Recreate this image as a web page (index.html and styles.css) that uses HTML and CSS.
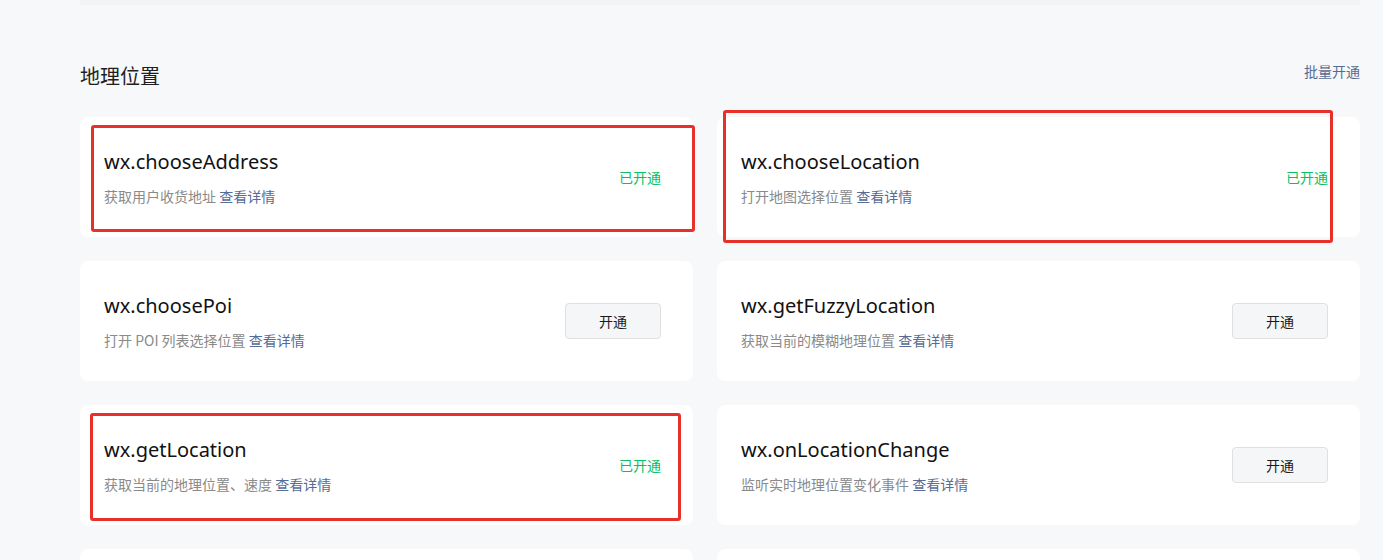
FILE: index.html
```html
<!DOCTYPE html>
<html lang="zh-CN">
<head>
<meta charset="utf-8">
<title>地理位置</title>
<link rel="stylesheet" href="styles.css">
</head>
<body>
<div class="page">
  <div class="top-bar"></div>
  <div class="section-head">
    <h2 class="section-title">地理位置</h2>
    <a class="batch-link">批量开通</a>
  </div>
  <div class="grid">
    <div class="card">
      <div class="info">
        <div class="api-name">wx.chooseAddress</div>
        <div class="api-desc">获取用户收货地址 <a class="detail">查看详情</a></div>
      </div>
      <span class="status">已开通</span>
    </div>
    <div class="card">
      <div class="info">
        <div class="api-name">wx.chooseLocation</div>
        <div class="api-desc">打开地图选择位置 <a class="detail">查看详情</a></div>
      </div>
      <span class="status">已开通</span>
    </div>
    <div class="card">
      <div class="info">
        <div class="api-name">wx.choosePoi</div>
        <div class="api-desc">打开 POI 列表选择位置 <a class="detail">查看详情</a></div>
      </div>
      <button class="open-btn">开通</button>
    </div>
    <div class="card">
      <div class="info">
        <div class="api-name">wx.getFuzzyLocation</div>
        <div class="api-desc">获取当前的模糊地理位置 <a class="detail">查看详情</a></div>
      </div>
      <button class="open-btn">开通</button>
    </div>
    <div class="card">
      <div class="info">
        <div class="api-name">wx.getLocation</div>
        <div class="api-desc">获取当前的地理位置、速度 <a class="detail">查看详情</a></div>
      </div>
      <span class="status">已开通</span>
    </div>
    <div class="card">
      <div class="info">
        <div class="api-name">wx.onLocationChange</div>
        <div class="api-desc">监听实时地理位置变化事件 <a class="detail">查看详情</a></div>
      </div>
      <button class="open-btn">开通</button>
    </div>
    <div class="card"></div>
    <div class="card"></div>
  </div>
</div>
<div class="mark mark-1"></div>
<div class="mark mark-2"></div>
<div class="mark mark-3"></div>
</body>
</html>
```

FILE: styles.css
```css
* { box-sizing: border-box; }
html, body { margin: 0; padding: 0; }
body {
  background: #f7f8fa;
  font-family: "Noto Sans", "Noto Sans CJK SC", sans-serif;
  color: rgba(0,0,0,0.9);
  overflow: hidden;
  height: 560px;
  position: relative;
}
.page {
  margin-left: 80px;
  width: 1280px;
}
.top-bar {
  height: 5px;
  background: #f2f3f5;
}
.section-head {
  display: flex;
  justify-content: space-between;
  align-items: flex-start;
  margin-top: 57px;
  margin-bottom: 27px;
}
.section-title {
  margin: 0;
  font-family: "Noto Sans CJK SC", sans-serif;
  font-size: 20px;
  font-weight: 400;
  line-height: 28px;
  color: #1f1f1f;
}
.batch-link {
  font-family: "Noto Sans CJK SC", sans-serif;
  font-size: 14px;
  line-height: 20px;
  color: #576b95;
  margin-top: -1px;
}
.grid {
  display: grid;
  grid-template-columns: 613px 643px;
  column-gap: 24px;
  row-gap: 24px;
}
.card {
  height: 120px;
  background: #fff;
  border-radius: 8px;
  display: flex;
  align-items: center;
  justify-content: space-between;
  padding: 0 32px 0 24px;
}
.info {
  display: flex;
  flex-direction: column;
  gap: 10px;
}
.api-name {
  font-size: 20px;
  line-height: 28px;
  color: #111;
}
.api-desc {
  font-family: "Noto Sans CJK SC", sans-serif;
  font-size: 14px;
  line-height: 20px;
  color: #8a8a8a;
}
.detail {
  color: #576b95;
}
.status {
  font-family: "Noto Sans CJK SC", sans-serif;
  font-size: 14px;
  color: #07c160;
}
.open-btn {
  width: 96px;
  height: 36px;
  background: #f5f6f7;
  border: 1px solid #e0e0e0;
  border-radius: 4px;
  font-family: "Noto Sans CJK SC", sans-serif;
  font-size: 14px;
  color: #1a1a1a;
  padding: 0;
}
.mark {
  position: absolute;
  border: 3px solid #e8302a;
  border-radius: 3px;
}
.mark-1 { left: 91px; top: 125px; width: 604px; height: 107px; }
.mark-2 { left: 723px; top: 110px; width: 610px; height: 133px; }
.mark-3 { left: 90px; top: 413px; width: 591px; height: 108px; }
```
